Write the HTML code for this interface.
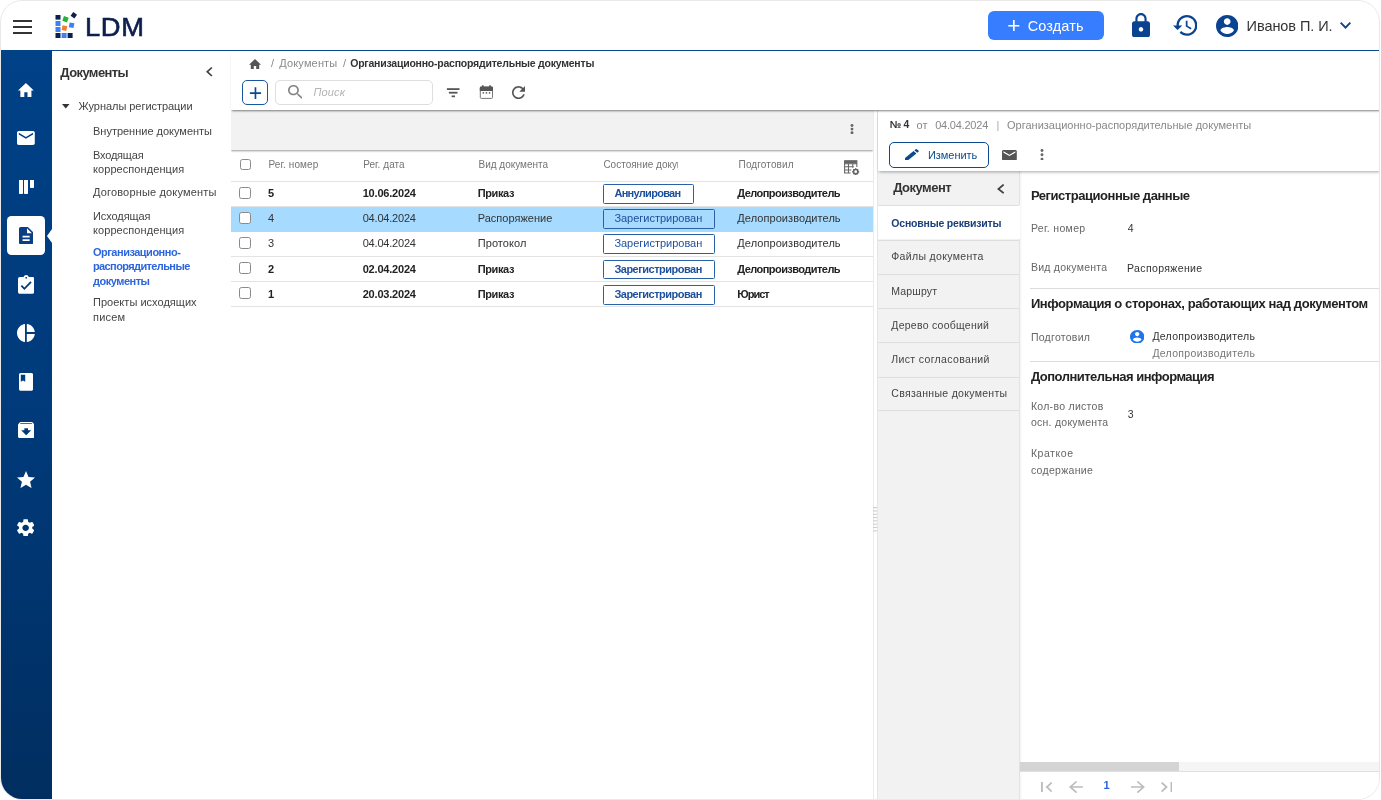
<!DOCTYPE html>
<html lang="ru">
<head>
<meta charset="utf-8">
<title>LDM</title>
<style>
*{box-sizing:border-box;margin:0;padding:0}
html,body{width:1381px;height:800px;overflow:hidden;background:#fff}
body{font-family:"Liberation Sans",sans-serif;font-size:11px;color:#333;position:relative}
.abs{position:absolute}
.t{position:absolute;white-space:nowrap;line-height:16px;font-weight:normal}
svg{display:block;position:absolute}
#frame{position:absolute;left:.2px;top:0;width:1380.3px;height:799.5px;border:1px solid #e9e9e9;border-radius:22px;overflow:hidden;background:#fff}
#pg{position:absolute;left:-1.2px;top:-1px;width:1381px;height:800px}
#hdrline{left:52px;top:50px;width:1330px;height:1px;background:#0b4a8e;box-shadow:0 0 .5px #0b4a8e}
#side{left:0;top:50px;width:52px;height:750px;background:linear-gradient(180deg,#004187 0%,#003a7a 50%,#002e60 100%)}
#nav{left:52px;top:51px;width:179.7px;height:749px;background:#fff;border-right:1.7px solid #ebebeb}
#topbar{left:231px;top:51px;width:1150px;height:59px;background:#fff;box-shadow:0 2px 2px -1px rgba(0,0,0,.5);z-index:3}
#tbl{left:231px;top:110px;width:641.5px;height:690px;background:#fff;overflow:hidden}
#graybar{left:0;top:0;width:100%;height:39.5px;background:#f2f2f2;box-shadow:0 1px 2px rgba(0,0,0,.4)}
.hl{position:absolute;left:0;width:100%;height:1px;background:#e3e3e3}
.cb{position:absolute;left:9px;width:11px;height:11px;border:1px solid #8a8a8a;border-radius:2.5px;background:#fff}
.cb.r{left:7.8px;width:12px;height:12px}
.badge{position:absolute;left:371.5px;height:19.6px;border:1.3px solid #2960a6;border-radius:1.5px;background:#fff}
#rp{left:877.3px;top:110px;width:503.7px;height:690px;background:#fff;border-left:1.4px solid #e6e6e6}
#rptop{left:0;top:0;width:100%;height:61px;background:#fff;box-shadow:0 2px 3px -1px rgba(0,0,0,.35);z-index:2}
#tabs{left:0;top:61px;width:141.5px;height:629px;background:#f2f2f2;border-right:1px solid #e2e2e2;box-shadow:1px 0 2px rgba(0,0,0,.05)}
.tl{position:absolute;left:0;width:140.5px;height:1px;background:#dedede}
</style>
</head>
<body>
<div id="frame"><div id="pg">

<!-- HEADER -->
<div class="abs" id="hdrline"></div>
<div class="abs" style="left:13px;top:20px;width:19px;height:2px;background:#333"></div>
<div class="abs" style="left:13px;top:26px;width:19px;height:2px;background:#333"></div>
<div class="abs" style="left:13px;top:32px;width:19px;height:2px;background:#333"></div>
<svg style="left:54px;top:10px" width="26" height="30" viewBox="54 10 26 30">
  <rect x="55.5" y="15" width="5" height="4.6" fill="#0c1f4d"/>
  <rect x="55.5" y="21" width="5" height="5" fill="#3b82f6"/>
  <rect x="55.5" y="27" width="5" height="5" fill="#3b82f6"/>
  <rect x="55.5" y="33" width="5" height="5" fill="#0c1f4d"/>
  <rect x="61.6" y="33" width="5" height="5" fill="#3b82f6"/>
  <rect x="67.6" y="33" width="5" height="5" fill="#0c1f4d"/>
  <rect x="63" y="16.8" width="5" height="5" fill="#22b53a" transform="rotate(20 65.5 19.3)"/>
  <rect x="62" y="25.7" width="4.8" height="4.8" fill="#f47c2c" transform="rotate(12 64.4 28.1)"/>
  <rect x="69.2" y="22.8" width="4.8" height="4.8" fill="#3b82f6" transform="rotate(10 71.6 25.2)"/>
  <rect x="71.5" y="13" width="4.6" height="4.6" fill="#0c1f4d" transform="rotate(35 73.8 15.3)"/>
</svg>
<span class="t" style="left:85.2px;top:12px;font-size:25.3px;line-height:30px;color:#0c1f4d;letter-spacing:.6px;-webkit-text-stroke:.6px #0c1f4d;transform:scaleX(1.08);transform-origin:0 0;will-change:transform">LDM</span>
<div class="abs" style="left:988.4px;top:11.3px;width:115.8px;height:28.3px;background:#377dff;border-radius:6px"></div>

<!-- SIDEBAR -->
<div class="abs" id="side"></div>
<div class="abs" style="left:7px;top:216.2px;width:38.4px;height:38.5px;background:#fff;border-radius:4.5px"></div>
<div class="abs" style="left:47px;top:229px;width:0;height:0;border-top:7px solid transparent;border-bottom:7px solid transparent;border-right:5px solid #fff;z-index:5"></div>
<div class="abs" style="left:18.9px;top:180.2px;width:4.2px;height:13.8px;background:#fff;border-radius:0 0 .8px .8px"></div>
<div class="abs" style="left:24.2px;top:180.2px;width:4.3px;height:13.8px;background:#fff;border-radius:0 0 .8px .8px"></div>
<div class="abs" style="left:29.6px;top:180.2px;width:4.2px;height:8px;background:#fff;border-radius:0 0 .8px .8px"></div>

<!-- NAV PANEL -->
<div class="abs" id="nav"></div>

<!-- MAIN TOP BAR -->
<div class="abs" id="topbar"></div>
<div class="abs" style="left:242.2px;top:80px;width:25.6px;height:25px;border:1.7px solid #1a569f;border-radius:5px;z-index:4"></div>
<div class="abs" style="left:275px;top:80.2px;width:158px;height:24.6px;border:1px solid #dedede;border-radius:5px;z-index:4"></div>

<!-- filter + calendar icons -->
<svg style="left:446px;top:84px;z-index:6" width="50" height="16" viewBox="446 84 50 16">
  <g fill="#555"><rect x="446.9" y="88.2" width="12.6" height="1.8"/><rect x="448.9" y="91.8" width="8.6" height="1.8"/><rect x="451.6" y="95.5" width="3.4" height="1.7"/></g>
  <rect x="480.3" y="87.2" width="12.2" height="11.2" rx="1" fill="#fff" stroke="#777" stroke-width="1"/>
  <path fill="#555" d="M479.8 91v-3.3a1.2 1.2 0 0 1 1.2-1.2h1v-1.3h1.6v1.3h5.6v-1.3h1.6v1.3h1a1.2 1.2 0 0 1 1.2 1.2V91z"/>
  <g fill="#555"><rect x="482.6" y="92.2" width="1.5" height="1.4"/><rect x="485.7" y="92.2" width="1.5" height="1.4"/><rect x="488.8" y="92.2" width="1.5" height="1.4"/></g>
</svg>

<!-- TABLE PANEL -->
<div class="abs" id="tbl">
  <div class="abs" id="graybar"></div>
  <div class="hl" style="top:71px"></div>
  <div class="abs" style="left:0;top:96.5px;width:100%;height:25.1px;background:#a6daff"></div>
  <div class="hl" style="top:95.6px"></div>
  
  <div class="hl" style="top:146px"></div>
  <div class="hl" style="top:171px"></div>
  <div class="hl" style="top:196px"></div>
  <div class="cb" style="top:48.6px"></div>
  <div class="cb r" style="top:76.8px"></div>
  <div class="cb r" style="top:101.8px"></div>
  <div class="cb r" style="top:126.8px"></div>
  <div class="cb r" style="top:152px"></div>
  <div class="cb r" style="top:177.3px"></div>
  <div class="badge" style="top:74.2px;width:91px"></div>
  <div class="badge" style="top:99.2px;width:112px;background:#a6daff"></div>
  <div class="badge" style="top:124.4px;width:112px"></div>
  <div class="badge" style="top:149.8px;width:112px"></div>
  <div class="badge" style="top:175px;width:112px"></div>
  <!-- table settings icon -->
  <svg style="left:613.4px;top:49.5px" width="15.6" height="15.6" viewBox="0 0 16 16">
    <path fill="none" stroke="#666" stroke-width="1.1" d="M.6 .9h12.6v3H.6zM.6 3.9v9.5h6.2M.6 7h9.5M.6 10.2h6.8M4.6 3.9v9.5M9 3.9v4M13.2 3.9v3.4"/>
    <rect x=".6" y=".6" width="12.6" height="3" fill="#666"/>
    <circle cx="12" cy="12" r="2.2" fill="none" stroke="#666" stroke-width="1.6"/>
    <path stroke="#666" stroke-width="1.4" d="M12 8.4v1.4M12 14.2v1.4M8.4 12h1.4M14.2 12h1.4M9.5 9.5l1 1M13.5 13.5l1 1M14.5 9.5l-1 1M10.5 13.5l-1 1"/>
  </svg>
</div>

<!-- SPLITTER -->
<div class="abs" style="left:872.5px;top:111px;width:1px;height:689px;background:#ececec"></div>
<svg style="left:873.2px;top:506.2px" width="4.6" height="27" viewBox="0 0 5 27"><g fill="#cdcdcd"><rect x="0" y="0" width="5" height="1.2"/><rect x="0" y="3.6" width="5" height="1.2"/><rect x="0" y="7.2" width="5" height="1.2"/><rect x="0" y="10.8" width="5" height="1.2"/><rect x="0" y="14.4" width="5" height="1.2"/><rect x="0" y="18" width="5" height="1.2"/><rect x="0" y="21.6" width="5" height="1.2"/><rect x="0" y="25.2" width="5" height="1.2"/></g></svg>

<!-- RIGHT PANEL -->
<div class="abs" id="rp">
  <div class="abs" id="rptop"></div>
  <div class="abs" style="left:10.8px;top:32px;width:100.2px;height:26px;border:1.5px solid #0b4a8e;border-radius:5px;z-index:3"></div>
  <div class="abs" id="tabs">
    <div class="abs" style="left:0;top:34.4px;width:141.5px;height:34.1px;background:#fff"></div>
    <div class="tl" style="top:34.4px"></div>
    <div class="tl" style="top:68.5px"></div>
    <div class="tl" style="top:103.4px"></div>
    <div class="tl" style="top:137.4px"></div>
    <div class="tl" style="top:171.3px"></div>
    <div class="tl" style="top:205.5px"></div>
    <div class="tl" style="top:238.8px"></div>
  </div>
  <div class="abs" style="left:152px;top:177.5px;width:351px;height:1px;background:#dcdcdc"></div>
  <div class="abs" style="left:152px;top:251px;width:351px;height:1px;background:#dcdcdc"></div>
  <div class="abs" style="left:142px;top:652px;width:361px;height:9px;background:#f5f5f5"></div>
  <div class="abs" style="left:142px;top:652px;width:159.2px;height:9px;background:#d4d4d4"></div>
  <div class="abs" style="left:142px;top:661px;width:361px;height:1px;background:#e0e0e0"></div>
</div>

<div id="icons" style="position:absolute;left:0;top:0;z-index:6">
<svg style="left:18px;top:82.8px" width="15.8" height="14.2" viewBox="2 3 20 17" preserveAspectRatio="none"><path fill="#fff" d="M10 20v-6h4v6h5v-8h3L12 3 2 12h3v8z"/></svg>
<svg style="left:17.2px;top:130.8px" width="17.8" height="13.9" viewBox="2 4 20 16" preserveAspectRatio="none"><path fill="#fff" d="M20 4H4c-1.1 0-1.99.9-1.99 2L2 18c0 1.1.9 2 2 2h16c1.1 0 2-.9 2-2V6c0-1.1-.9-2-2-2zm0 4l-8 5-8-5V6l8 5 8-5v2z"/></svg>
<svg style="left:18.8px;top:226.7px" width="14.2" height="17.6" viewBox="4 2 16 20" preserveAspectRatio="none"><path fill="#0b3f85" d="M14 2H6c-1.1 0-1.99.9-1.99 2L4 20c0 1.1.89 2 1.99 2H18c1.1 0 2-.9 2-2V8l-6-6zm2 16H8v-2h8v2zm0-4H8v-2h8v2zm-3-5V3.5L18.5 9H13z"/></svg>
<svg style="left:17.8px;top:275.2px" width="16.4" height="18.8" viewBox="3 1 18 20" preserveAspectRatio="none"><path fill="#fff" d="M19 3h-4.18C14.4 1.84 13.3 1 12 1c-1.3 0-2.4.84-2.82 2H5c-1.1 0-2 .9-2 2v14c0 1.1.9 2 2 2h14c1.1 0 2-.9 2-2V5c0-1.1-.9-2-2-2zm-7 0c.55 0 1 .45 1 1s-.45 1-1 1-1-.45-1-1 .45-1 1-1zm-2 14l-4-4 1.41-1.41L10 14.17l6.59-6.59L18 9l-8 8z"/></svg>
<svg style="left:17.2px;top:323.8px" width="17.8" height="18" viewBox="2 2 20 20" preserveAspectRatio="none"><path fill="#fff" d="M11 2v20c-5.07-.5-9-4.79-9-10s3.93-9.5 9-10zm2.03 0v8.99H22c-.47-4.74-4.24-8.52-8.97-8.99zm0 11.01V22c4.74-.47 8.5-4.25 8.97-8.99h-8.97z"/></svg>
<svg style="left:18.8px;top:373px" width="14.2" height="17.7" viewBox="4 2 16 20" preserveAspectRatio="none"><path fill="#fff" d="M18 2H6c-1.1 0-2 .9-2 2v16c0 1.1.9 2 2 2h12c1.1 0 2-.9 2-2V4c0-1.1-.9-2-2-2zM6 4h5v8l-2.5-1.5L6 12V4z"/></svg>
<svg style="left:17.8px;top:422px" width="16.4" height="16.3" viewBox="3 3 18 18" preserveAspectRatio="none"><path fill="#fff" d="M20.54 5.23l-1.39-1.68C18.88 3.21 18.47 3 18 3H6c-.47 0-.88.21-1.16.55L3.46 5.23C3.17 5.57 3 6.02 3 6.5V19c0 1.1.9 2 2 2h14c1.1 0 2-.9 2-2V6.5c0-.48-.17-.93-.46-1.27zM12 17.5L6.5 12H10v-2h4v2h3.5L12 17.5zM5.12 5l.81-1h12l.94 1H5.12z"/></svg>
<svg style="left:17px;top:470.7px" width="18" height="17.1" viewBox="2 2 20 19" preserveAspectRatio="none"><path fill="#fff" d="M12 17.27L18.18 21l-1.64-7.03L22 9.24l-7.19-.61L12 2 9.19 8.63 2 9.24l5.46 4.73L5.82 21z"/></svg>
<svg style="left:17.2px;top:518.7px" width="17.3" height="17.6" viewBox="2.6 2 18.8 20" preserveAspectRatio="none"><path fill="#fff" d="M19.14 12.94c.04-.3.06-.61.06-.94 0-.32-.02-.64-.07-.94l2.03-1.58c.18-.14.23-.41.12-.61l-1.92-3.32c-.12-.22-.37-.29-.59-.22l-2.39.96c-.5-.38-1.03-.7-1.62-.94l-.36-2.54c-.04-.24-.24-.41-.48-.41h-3.84c-.24 0-.43.17-.47.41l-.36 2.54c-.59.24-1.13.57-1.62.94l-2.39-.96c-.22-.08-.47 0-.59.22L2.74 8.87c-.12.21-.08.47.12.61l2.03 1.58c-.05.3-.09.63-.09.94s.02.64.07.94l-2.03 1.58c-.18.14-.23.41-.12.61l1.92 3.32c.12.22.37.29.59.22l2.39-.96c.5.38 1.03.7 1.62.94l.36 2.54c.05.24.24.41.48.41h3.84c.24 0 .44-.17.47-.41l.36-2.54c.59-.24 1.13-.56 1.62-.94l2.39.96c.22.08.47 0 .59-.22l1.92-3.32c.12-.22.07-.47-.12-.61l-2.01-1.58zM12 15.6c-1.98 0-3.6-1.62-3.6-3.6s1.62-3.6 3.6-3.6 3.6 1.62 3.6 3.6-1.62 3.6-3.6 3.6z"/></svg>
<svg style="left:1131.6px;top:12.8px" width="18" height="24.4" viewBox="4 1 16 21" preserveAspectRatio="none"><path fill="#0a4390" d="M18 8h-1V6c0-2.76-2.24-5-5-5S7 3.24 7 6v2H6c-1.1 0-2 .9-2 2v10c0 1.1.9 2 2 2h12c1.1 0 2-.9 2-2V10c0-1.1-.9-2-2-2zm-6 9c-1.1 0-2-.9-2-2s.9-2 2-2 2 .9 2 2-.9 2-2 2zm3.1-9H8.9V6c0-1.71 1.39-3.1 3.1-3.1 1.71 0 3.1 1.39 3.1 3.1v2z"/></svg>
<svg style="left:1172.5px;top:15.2px" width="24.4" height="20.8" viewBox="1 3 21 18" preserveAspectRatio="none"><path fill="#0a4390" d="M13 3c-4.97 0-9 4.03-9 9H1l3.89 3.89.07.14L9 12H6c0-3.87 3.13-7 7-7s7 3.13 7 7-3.13 7-7 7c-1.93 0-3.68-.79-4.94-2.06l-1.42 1.42C8.27 19.99 10.51 21 13 21c4.97 0 9-4.03 9-9s-4.03-9-9-9zm-1 5v5l4.28 2.54.72-1.21-3.5-2.08V8H12z"/></svg>
<svg style="left:1216px;top:14.6px" width="22.4" height="22" viewBox="2 2 20 20" preserveAspectRatio="none"><path fill="#0a4390" d="M12 2C6.48 2 2 6.48 2 12s4.48 10 10 10 10-4.48 10-10S17.52 2 12 2zm0 3c1.66 0 3 1.34 3 3s-1.34 3-3 3-3-1.34-3-3 1.34-3 3-3zm0 14.2c-2.5 0-4.71-1.28-6-3.22.03-1.99 4-3.08 6-3.08 1.99 0 5.97 1.09 6 3.08-1.29 1.94-3.5 3.22-6 3.22z"/></svg>
<svg style="left:1340px;top:22px" width="11" height="7" viewBox="6 8.59 12 7.41" preserveAspectRatio="none"><path fill="#0a4390" d="M16.59 8.59L12 13.17 7.41 8.59 6 10l6 6 6-6z"/></svg>
<svg style="left:206px;top:67px" width="6.5" height="9.5" viewBox="8 6 7.41 12" preserveAspectRatio="none"><path fill="#444" d="M15.41 7.41L14 6l-6 6 6 6 1.41-1.41L10.83 12z"/></svg>
<svg style="left:62px;top:104px" width="7.5" height="4.5" viewBox="7 10 10 5" preserveAspectRatio="none"><path fill="#333" d="M7 10l5 5 5-5z"/></svg>
<svg style="left:249px;top:58.5px" width="12" height="10.8" viewBox="2 3 20 17" preserveAspectRatio="none"><path fill="#555" d="M10 20v-6h4v6h5v-8h3L12 3 2 12h3v8z"/></svg>
<svg style="left:287.8px;top:85px" width="14.7" height="13.8" viewBox="3 3 17.49 17.49" preserveAspectRatio="none"><path fill="#858585" d="M15.5 14h-.79l-.28-.27C15.41 12.59 16 11.11 16 9.5 16 5.91 13.09 3 9.5 3S3 5.91 3 9.5 5.91 16 9.5 16c1.61 0 3.09-.59 4.23-1.57l.27.28v.79l5 4.99L20.49 19l-4.99-5zm-6 0C7.01 14 5 11.99 5 9.5S7.01 5 9.5 5 14 7.01 14 9.5 11.99 14 9.5 14z"/></svg>
<svg style="left:512.4px;top:86.3px" width="13" height="13.1" viewBox="4 4 16 16" preserveAspectRatio="none"><path fill="#555" d="M17.65 6.35C16.2 4.9 14.21 4 12 4c-4.42 0-7.99 3.58-7.99 8s3.57 8 7.99 8c3.73 0 6.84-2.55 7.73-6h-2.08c-.82 2.33-3.04 4-5.65 4-3.31 0-6-2.69-6-6s2.69-6 6-6c1.66 0 3.14.69 4.22 1.78L13 11h7V4l-2.35 2.35z"/></svg>
<svg style="left:848.9px;top:124.2px" width="6" height="10.2" viewBox="0 0 6 10.2"><circle cx="3" cy="1.45" r="1.45" fill="#666"/><circle cx="3" cy="5.1" r="1.45" fill="#666"/><circle cx="3" cy="8.75" r="1.45" fill="#666"/></svg>
<svg style="left:905.3px;top:149px" width="13.9" height="11.4" viewBox="3 3 18 18" preserveAspectRatio="none"><path fill="#0b4a8e" d="M3 17.25V21h3.75L17.81 9.94l-3.75-3.75L3 17.25zM20.71 7.04c.39-.39.39-1.02 0-1.41l-2.34-2.34c-.39-.39-1.02-.39-1.41 0l-1.83 1.83 3.75 3.75 1.83-1.83z"/></svg>
<svg style="left:1002.2px;top:149.5px" width="14.8" height="10.7" viewBox="2 4 20 16" preserveAspectRatio="none"><path fill="#555" d="M20 4H4c-1.1 0-1.99.9-1.99 2L2 18c0 1.1.9 2 2 2h16c1.1 0 2-.9 2-2V6c0-1.1-.9-2-2-2zm0 4l-8 5-8-5V6l8 5 8-5v2z"/></svg>
<svg style="left:1038.9px;top:148.6px" width="6" height="11.6" viewBox="0 0 6 11.6"><circle cx="3" cy="1.45" r="1.45" fill="#666"/><circle cx="3" cy="5.8" r="1.45" fill="#666"/><circle cx="3" cy="10.15" r="1.45" fill="#666"/></svg>
<svg style="left:996.6px;top:183.8px" width="7.4" height="9.8" viewBox="8 6 7.41 12" preserveAspectRatio="none"><path fill="#444" d="M15.41 7.41L14 6l-6 6 6 6 1.41-1.41L10.83 12z"/></svg>
<svg style="left:1129.5px;top:329.8px" width="14.4" height="13.7" viewBox="2 2 20 20" preserveAspectRatio="none"><path fill="#1f75ee" d="M12 2C6.48 2 2 6.48 2 12s4.48 10 10 10 10-4.48 10-10S17.52 2 12 2zm0 3c1.66 0 3 1.34 3 3s-1.34 3-3 3-3-1.34-3-3 1.34-3 3-3zm0 14.2c-2.5 0-4.71-1.28-6-3.22.03-1.99 4-3.08 6-3.08 1.99 0 5.97 1.09 6 3.08-1.29 1.94-3.5 3.22-6 3.22z"/></svg>
<svg style="left:1041px;top:781.5px" width="11.4" height="10.2" viewBox="6 6 12.41 12" preserveAspectRatio="none"><path fill="#bcbcbc" d="M18.41 16.59L13.82 12l4.59-4.59L17 6l-6 6 6 6zM6 6h2v12H6z"/></svg>
<svg style="left:1069.4px;top:780.5px" width="13.9" height="12.2" viewBox="4 4 16 16" preserveAspectRatio="none"><path fill="#bcbcbc" d="M20 11H7.83l5.59-5.59L12 4l-8 8 8 8 1.41-1.41L7.83 13H20v-2z"/></svg>
<svg style="left:1130.9px;top:780.5px" width="13.9" height="12.2" viewBox="4 4 16 16" preserveAspectRatio="none"><path fill="#bcbcbc" d="M12 4l-1.41 1.41L16.17 11H4v2h12.17l-5.58 5.59L12 20l8-8z"/></svg>
<svg style="left:1161px;top:781.5px" width="11.4" height="10.2" viewBox="5.59 6 12.41 12" preserveAspectRatio="none"><path fill="#bcbcbc" d="M5.59 7.41L10.18 12l-4.59 4.59L7 18l6-6-6-6zM16 6h2v12h-2z"/></svg>
</div>
<div id="texts" style="position:absolute;left:0;top:0;z-index:7;will-change:transform">
<span class="t" style="left:1007.3px;top:17.6px;font-size:22.5px;color:#fff;font-weight:normal;">+</span>
<span class="t" style="left:1027.7px;top:18px;font-size:14.5px;color:#fff;letter-spacing:0.115px;">Создать</span>
<span class="t" style="left:1246.6px;top:18px;font-size:14.5px;color:#333;letter-spacing:-0.07px;">Иванов П. И.</span>
<span class="t" style="left:60.3px;top:64.5px;font-size:13px;color:#333;letter-spacing:-0.587px;font-weight:bold;">Документы</span>
<span class="t" style="left:78.5px;top:98.4px;font-size:11px;color:#444;letter-spacing:-0.042px;">Журналы регистрации</span>
<span class="t" style="left:93px;top:123px;font-size:11px;color:#444;letter-spacing:-0.011px;">Внутренние документы</span>
<span class="t" style="left:93px;top:147px;font-size:11px;color:#444;letter-spacing:-0.196px;">Входящая</span>
<span class="t" style="left:93px;top:161px;font-size:11px;color:#444;letter-spacing:0.073px;">корреспонденция</span>
<span class="t" style="left:93px;top:184px;font-size:11px;color:#444;letter-spacing:0.161px;">Договорные документы</span>
<span class="t" style="left:93px;top:208px;font-size:11px;color:#444;letter-spacing:-0.084px;">Исходящая</span>
<span class="t" style="left:93px;top:222px;font-size:11px;color:#444;letter-spacing:0.073px;">корреспонденция</span>
<span class="t" style="left:93px;top:244px;font-size:11px;color:#2d66dc;letter-spacing:-0.496px;font-weight:bold;">Организационно-</span>
<span class="t" style="left:93px;top:258px;font-size:11px;color:#2d66dc;letter-spacing:-0.611px;font-weight:bold;">распорядительные</span>
<span class="t" style="left:93px;top:273px;font-size:11px;color:#2d66dc;letter-spacing:-0.484px;font-weight:bold;">документы</span>
<span class="t" style="left:93px;top:294px;font-size:11px;color:#444;letter-spacing:0.027px;">Проекты исходящих</span>
<span class="t" style="left:93px;top:309px;font-size:11px;color:#444;letter-spacing:0.18px;">писем</span>
<span class="t" style="left:271px;top:54.9px;font-size:11px;color:#8a8a8a;">/</span>
<span class="t" style="left:279.3px;top:54.9px;font-size:11px;color:#8a8a8a;letter-spacing:0.15px;">Документы</span>
<span class="t" style="left:343px;top:54.9px;font-size:11px;color:#8a8a8a;">/</span>
<span class="t" style="left:350.2px;top:54.9px;font-size:10.5px;color:#333;letter-spacing:-0.222px;font-weight:bold;">Организационно-распорядительные документы</span>
<span class="t" style="left:248.8px;top:84.75px;font-size:23px;color:#0b4a8e;font-weight:normal;">+</span>
<span class="t" style="left:313.4px;top:84.1px;font-size:11px;color:#b4b4b4;letter-spacing:0.173px;font-style:italic;">Поиск</span>
<span class="t" style="left:268.5px;top:157px;font-size:10px;color:#747474;letter-spacing:0.105px;">Рег. номер</span>
<span class="t" style="left:363.2px;top:157px;font-size:10px;color:#747474;letter-spacing:0.064px;">Рег. дата</span>
<span class="t" style="left:478.5px;top:157px;font-size:10px;color:#747474;letter-spacing:-0.012px;">Вид документа</span>
<span class="t" style="left:603.4px;top:157px;font-size:10px;color:#747474;width:75px;overflow:hidden;">Состояние докум</span>
<span class="t" style="left:738.6px;top:157px;font-size:10px;color:#747474;letter-spacing:0.122px;">Подготовил</span>
<span class="t" style="left:267.9px;top:185.3px;font-size:11px;color:#222;font-weight:bold;">5</span>
<span class="t" style="left:362.7px;top:185.3px;font-size:11px;color:#222;letter-spacing:-0.196px;font-weight:bold;">10.06.2024</span>
<span class="t" style="left:477.7px;top:185.3px;font-size:11px;color:#222;letter-spacing:-0.385px;font-weight:bold;">Приказ</span>
<span class="t" style="left:614.4px;top:185.3px;font-size:11px;color:#1d4f9c;letter-spacing:-0.698px;font-weight:bold;">Аннулирован</span>
<span class="t" style="left:737.3px;top:185.3px;font-size:11px;color:#222;letter-spacing:-0.554px;font-weight:bold;">Делопроизводитель</span>
<span class="t" style="left:267.9px;top:210.3px;font-size:11px;color:#333;">4</span>
<span class="t" style="left:362.7px;top:210.3px;font-size:11px;color:#333;letter-spacing:-0.196px;">04.04.2024</span>
<span class="t" style="left:477.7px;top:210.3px;font-size:11px;color:#333;letter-spacing:0.015px;">Распоряжение</span>
<span class="t" style="left:614.4px;top:210.3px;font-size:11px;color:#1d4f9c;letter-spacing:-0.015px;">Зарегистрирован</span>
<span class="t" style="left:737.3px;top:210.3px;font-size:11px;color:#333;letter-spacing:0.068px;">Делопроизводитель</span>
<span class="t" style="left:267.9px;top:235.3px;font-size:11px;color:#333;">3</span>
<span class="t" style="left:362.7px;top:235.3px;font-size:11px;color:#333;letter-spacing:-0.196px;">04.04.2024</span>
<span class="t" style="left:477.7px;top:235.3px;font-size:11px;color:#333;letter-spacing:0.09px;">Протокол</span>
<span class="t" style="left:614.4px;top:235.3px;font-size:11px;color:#1d4f9c;letter-spacing:-0.015px;">Зарегистрирован</span>
<span class="t" style="left:737.3px;top:235.3px;font-size:11px;color:#333;letter-spacing:0.068px;">Делопроизводитель</span>
<span class="t" style="left:267.9px;top:260.6px;font-size:11px;color:#222;font-weight:bold;">2</span>
<span class="t" style="left:362.7px;top:260.6px;font-size:11px;color:#222;letter-spacing:-0.196px;font-weight:bold;">02.04.2024</span>
<span class="t" style="left:477.7px;top:260.6px;font-size:11px;color:#222;letter-spacing:-0.385px;font-weight:bold;">Приказ</span>
<span class="t" style="left:614.4px;top:260.6px;font-size:11px;color:#1d4f9c;letter-spacing:-0.507px;font-weight:bold;">Зарегистрирован</span>
<span class="t" style="left:737.3px;top:260.6px;font-size:11px;color:#222;letter-spacing:-0.554px;font-weight:bold;">Делопроизводитель</span>
<span class="t" style="left:267.9px;top:286px;font-size:11px;color:#222;font-weight:bold;">1</span>
<span class="t" style="left:362.7px;top:286px;font-size:11px;color:#222;letter-spacing:-0.196px;font-weight:bold;">20.03.2024</span>
<span class="t" style="left:477.7px;top:286px;font-size:11px;color:#222;letter-spacing:-0.385px;font-weight:bold;">Приказ</span>
<span class="t" style="left:614.4px;top:286px;font-size:11px;color:#1d4f9c;letter-spacing:-0.507px;font-weight:bold;">Зарегистрирован</span>
<span class="t" style="left:737.3px;top:286px;font-size:11px;color:#222;letter-spacing:-0.986px;font-weight:bold;">Юрист</span>
<span class="t" style="left:889.8px;top:117.2px;font-size:10.3px;color:#333;letter-spacing:-0.339px;font-weight:bold;">№ 4</span>
<span class="t" style="left:916.5px;top:117.2px;font-size:11px;color:#888;letter-spacing:0.078px;">от</span>
<span class="t" style="left:935.2px;top:117.2px;font-size:11px;color:#888;letter-spacing:-0.218px;">04.04.2024</span>
<span class="t" style="left:996.6px;top:117.2px;font-size:11px;color:#aaa;">|</span>
<span class="t" style="left:1007px;top:117.2px;font-size:11px;color:#888;letter-spacing:-0.002px;">Организационно-распорядительные документы</span>
<span class="t" style="left:927.9px;top:147px;font-size:11px;color:#0b4a8e;letter-spacing:-0.032px;">Изменить</span>
<span class="t" style="left:893.2px;top:180px;font-size:13px;color:#333;letter-spacing:-0.5px;font-weight:bold;">Документ</span>
<span class="t" style="left:891.3px;top:215px;font-size:10.5px;color:#1a3f7a;letter-spacing:-0.194px;font-weight:bold;">Основные реквизиты</span>
<span class="t" style="left:891.3px;top:247.8px;font-size:10.5px;color:#444;letter-spacing:0.33px;">Файлы документа</span>
<span class="t" style="left:891.3px;top:282.5px;font-size:10.5px;color:#444;letter-spacing:0.158px;">Маршрут</span>
<span class="t" style="left:891.3px;top:317.2px;font-size:10.5px;color:#444;letter-spacing:0.259px;">Дерево сообщений</span>
<span class="t" style="left:891.3px;top:350.7px;font-size:10.5px;color:#444;letter-spacing:0.347px;">Лист согласований</span>
<span class="t" style="left:891.3px;top:384.6px;font-size:10.5px;color:#444;letter-spacing:0.305px;">Связанные документы</span>
<span class="t" style="left:1030.9px;top:188.2px;font-size:13px;color:#222;letter-spacing:-0.459px;font-weight:bold;">Регистрационные данные</span>
<span class="t" style="left:1030.9px;top:220.3px;font-size:10.5px;color:#666;letter-spacing:0.332px;">Рег. номер</span>
<span class="t" style="left:1127.8px;top:220.3px;font-size:10.5px;color:#333;">4</span>
<span class="t" style="left:1030.9px;top:259px;font-size:10.5px;color:#666;letter-spacing:0.256px;">Вид документа</span>
<span class="t" style="left:1127.1px;top:260.3px;font-size:10.5px;color:#333;letter-spacing:0.368px;">Распоряжение</span>
<span class="t" style="left:1030.9px;top:296px;font-size:13px;color:#222;letter-spacing:-0.411px;font-weight:bold;">Информация о сторонах, работающих над документом</span>
<span class="t" style="left:1030.9px;top:328.5px;font-size:10.5px;color:#666;letter-spacing:0.278px;">Подготовил</span>
<span class="t" style="left:1152.4px;top:327.8px;font-size:10.5px;color:#333;letter-spacing:0.314px;">Делопроизводитель</span>
<span class="t" style="left:1152.4px;top:345px;font-size:10.5px;color:#777;letter-spacing:0.314px;">Делопроизводитель</span>
<span class="t" style="left:1030.9px;top:369.3px;font-size:13px;color:#222;letter-spacing:-0.515px;font-weight:bold;">Дополнительная информация</span>
<span class="t" style="left:1030.9px;top:398px;font-size:10.5px;color:#666;letter-spacing:0.29px;">Кол-во листов</span>
<span class="t" style="left:1030.9px;top:413.5px;font-size:10.5px;color:#666;letter-spacing:0.26px;">осн. документа</span>
<span class="t" style="left:1127.8px;top:406.3px;font-size:10.5px;color:#333;">3</span>
<span class="t" style="left:1030.9px;top:445.2px;font-size:10.5px;color:#666;letter-spacing:0.556px;">Краткое</span>
<span class="t" style="left:1030.9px;top:461.8px;font-size:10.5px;color:#666;letter-spacing:0.305px;">содержание</span>
<span class="t" style="left:1103.6px;top:777.4px;font-size:11px;color:#2d66dc;font-weight:bold;">1</span>
</div>

</div></div>
</body>
</html>
